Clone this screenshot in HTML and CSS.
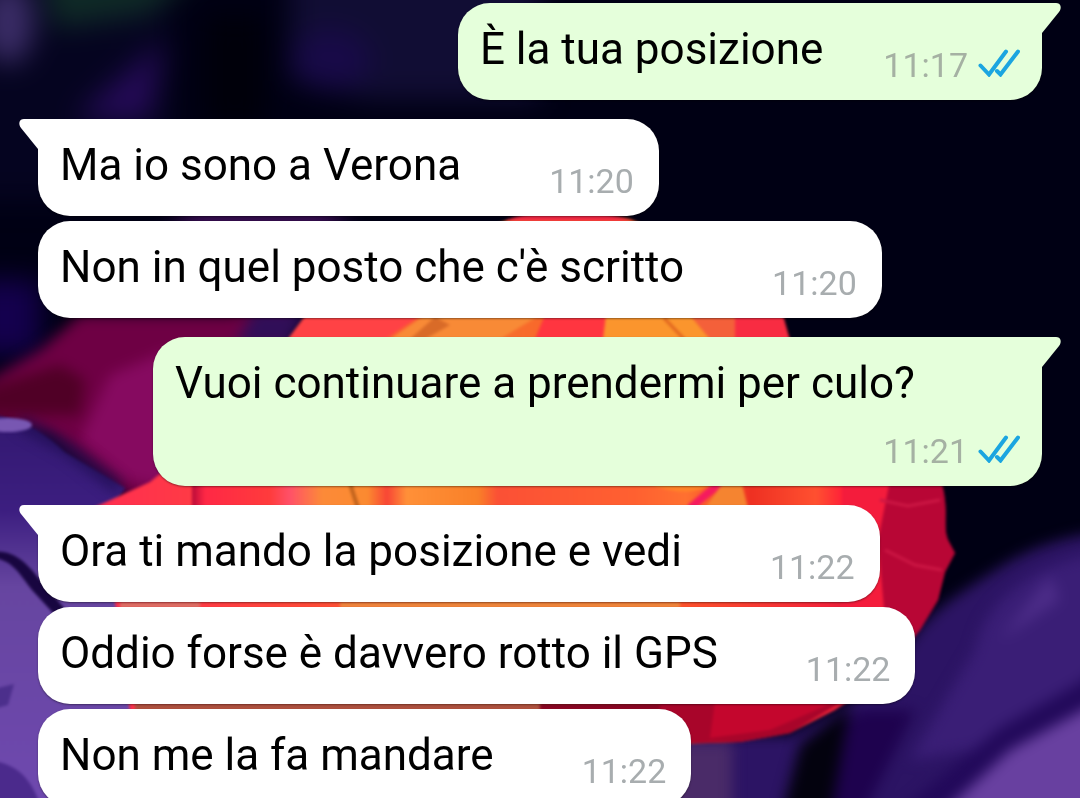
FILE: index.html
```html
<!DOCTYPE html>
<html lang="it">
<head>
    <meta charset="UTF-8">
    <meta name="viewport" content="width=device-width, initial-scale=1.0">
    <title>Chat</title>
    <link rel="stylesheet" href="styles.css">
</head>
<body>
    <!-- Wallpaper: rose on dark petals -->
    <svg class="wallpaper" viewBox="0 0 1080 798" preserveAspectRatio="xMidYMid slice" aria-hidden="true">
        <defs>
            <filter id="soft" x="-30%" y="-30%" width="160%" height="160%" color-interpolation-filters="sRGB"><feGaussianBlur stdDeviation="14"/></filter>
            <filter id="blur" x="-20%" y="-20%" width="140%" height="140%" color-interpolation-filters="sRGB"><feGaussianBlur stdDeviation="7"/></filter>
            <filter id="edge" color-interpolation-filters="sRGB"><feGaussianBlur stdDeviation="1.5"/></filter>
            <linearGradient id="rose" x1="0" y1="0" x2="1" y2="0">
                <stop offset="0" stop-color="#ff2d50"/>
                <stop offset="0.25" stop-color="#ff4a38"/>
                <stop offset="0.45" stop-color="#f5702c"/>
                <stop offset="0.65" stop-color="#ff5a28"/>
                <stop offset="0.85" stop-color="#f4243a"/>
                <stop offset="1" stop-color="#a80834"/>
            </linearGradient>
            <linearGradient id="heart" gradientUnits="userSpaceOnUse" x1="192" y1="0" x2="842" y2="0">
                <stop offset="0" stop-color="#b80a38"/>
                <stop offset="0.02" stop-color="#ff2845"/>
                <stop offset="0.12" stop-color="#ff3b3c"/>
                <stop offset="0.15" stop-color="#ff5068"/>
                <stop offset="0.2" stop-color="#fc8a38"/>
                <stop offset="0.27" stop-color="#fb8a30"/>
                <stop offset="0.3" stop-color="#f84535"/>
                <stop offset="0.33" stop-color="#ff9038"/>
                <stop offset="0.44" stop-color="#f98028"/>
                <stop offset="0.47" stop-color="#fb5035"/>
                <stop offset="0.68" stop-color="#ff6030"/>
                <stop offset="0.76" stop-color="#ff7030"/>
                <stop offset="0.86" stop-color="#ee3022"/>
                <stop offset="0.96" stop-color="#ff5030"/>
                <stop offset="1" stop-color="#ff2238"/>
            </linearGradient>
            <linearGradient id="petal" gradientUnits="userSpaceOnUse" x1="0" y1="415" x2="0" y2="798">
                <stop offset="0" stop-color="#321870"/>
                <stop offset="0.25" stop-color="#3c1e80"/>
                <stop offset="0.45" stop-color="#6645a0"/>
                <stop offset="1" stop-color="#6e48ae"/>
            </linearGradient>
        </defs>
        <rect width="1080" height="798" fill="#000014"/>
        <g filter="url(#soft)">
            <path d="M-60 -60H170V200H-60Z" fill="#050420"/>
            <path d="M290 -60H540V100H370L290 80Z" fill="#110d34"/>
            <ellipse cx="8" cy="22" rx="26" ry="42" fill="#3a2c66"/>
            <path d="M40 -30H200L150 14L55 28Z" fill="#0f2a26"/>
            <path d="M100 95L165 40L150 120H75Z" fill="#240a56"/>
            <ellipse cx="330" cy="60" rx="40" ry="30" fill="#180a48"/>
            <path d="M205 15H265V130H205Z" fill="#00000a"/>
            <path d="M180 205H340V235H180Z" fill="#451060"/>
            <path d="M-30 280H40V355H-30Z" fill="#14004e"/>
        </g>
        <g filter="url(#blur)">
            <path d="M-20 385L40 350L80 315H230L290 300V500H130L50 435L-20 420Z" fill="#6e0044"/>
            <path d="M-20 390L60 365L85 380L80 415L20 415H-20Z" fill="#500026"/>
            <path d="M110 375L170 350V490L125 480L80 440Z" fill="#860a60"/>
            <path d="M255 310H310L290 345H235Z" fill="#300e58"/>
        </g>
        <g filter="url(#edge)">
            <path d="M-10 415C25 418 50 438 65 452L125 488L105 520L130 615L135 810H-10Z" fill="url(#petal)"/>
            <path d="M-10 552C15 548 28 565 42 582L70 615H55L32 590C20 575 12 558 -10 558Z" fill="#180640"/>
            <path d="M-10 690L14 684L8 705L-10 710Z" fill="#4c2f8c"/>
            <path d="M-10 760C20 765 32 780 42 810H-10Z" fill="#4b2a8c"/>
        </g>
        <path d="M20 422L70 450L120 488" stroke="#1e0c50" stroke-width="10" fill="none" filter="url(#blur)"/>
        <ellipse cx="8" cy="425" rx="24" ry="7" fill="#7857b2" filter="url(#edge)"/>
        <path d="M1110 530C1030 542 1010 562 980 580C950 600 925 615 905 650L840 710L790 735L680 735V840H1110Z" fill="#2c1464" filter="url(#blur)"/>
        <g filter="url(#blur)">
            <path d="M1110 550C1030 565 985 600 975 650L910 760L1000 745L1110 660Z" fill="#3a1e76"/>
            <path d="M1050 575L1000 640L1060 600Z" fill="#4c2c88"/>
            <path d="M1120 685L1020 735L915 820H1120Z" fill="#6840a0"/>
            <path d="M1120 660L1000 728L890 820H935L1010 750L1120 690Z" fill="#22095a"/>
            <path d="M860 710H915L860 820H810L815 750Z" fill="#1e024e"/>
            <path d="M800 745L850 705L830 820H780Z" fill="#03020e"/>
            <path d="M670 742H732V820H670Z" fill="#4a2b68"/>
        </g>
        <g filter="url(#edge)">
            <path d="M505 221C530 210 600 210 630 219L700 250L770 310L790 340L941 485C950 510 942 525 948 540L955 553L945 572L938 600L920 630L880 680L835 710L790 733L740 742L680 744L130 712L115 602L95 507L150 482L250 400L290 336L305 316L400 260Z" fill="url(#rose)"/>
            <path d="M505 221C530 208 600 208 632 221Z" fill="#f02844"/>
            <path d="M305 316H420L385 339H289Z" fill="#ff4245"/>
            <path d="M390 339L425 315H540L500 339Z" fill="#f88a36"/>
            <path d="M410 339L435 317L450 325L425 339Z" fill="#d96b28"/>
            <path d="M545 315H606L604 339H535Z" fill="#ff3540"/>
            <path d="M606 315H690L710 339H603Z" fill="#fb952d"/>
            <path d="M664 318L685 340" stroke="#e0641f" stroke-width="3"/>
            <path d="M690 315H740V339H710Z" fill="#f4603a"/>
            <path d="M735 315H783L790 340H735Z" fill="#f82c42"/>
            <path d="M192 480H842V510H192Z" fill="url(#heart)"/>
            <path d="M350 482L352 490L358 508" stroke="#c0621c" stroke-width="4" fill="none"/>
            <path d="M650 484C680 496 700 492 712 484Z" fill="#ff8428"/>
            <path d="M690 508L708 493L722 482" stroke="#f51b5e" stroke-width="8" fill="none"/>
            <path d="M722 484H742L748 508H705Z" fill="#f58430"/>
            <path d="M875 480H941C950 510 942 525 948 540L955 553L945 572L938 600L920 630L875 680L862 560Z" fill="#b80635"/>
            <path d="M842 480H890L878 540L885 620H842Z" fill="#f41c3c"/>
            <path d="M880 500L908 506L940 500M885 550L915 565L942 570" stroke="#cc1744" stroke-width="3" fill="none"/>
            <path d="M120 602H200V608H120Z" fill="#dd7065"/>
            <path d="M340 602H680V608H340Z" fill="#ee863c"/>
            <path d="M135 703H540V711H135Z" fill="#ae513f"/>
            <path d="M540 703H690V711H540Z" fill="#880523"/>
            <path d="M660 700H845L790 733L740 742L660 744Z" fill="#a8052a"/>
            <path d="M715 700L835 702L770 730L710 738Z" fill="#c4062d"/>
        </g>
    </svg>

    <main class="chat">
        <div class="message sent tail">
            <span class="text">È la tua posizione</span>
            <span class="meta">
                <time>11:17</time>
                <svg class="ticks" viewBox="0 0 42 28" role="img" aria-label="Letto"><path d="M2.5 16.5L11 25.5L28 2.5M19 22L22.5 25.5L40 2.5"/></svg>
            </span>
        </div>

        <div class="message received tail">
            <span class="text">Ma io sono a Verona</span>
            <span class="meta"><time>11:20</time></span>
        </div>
        <div class="message received">
            <span class="text">Non in quel posto che c'è scritto</span>
            <span class="meta"><time>11:20</time></span>
        </div>

        <div class="message sent tail">
            <span class="text">Vuoi continuare a prendermi per culo?</span>
            <span class="meta">
                <time>11:21</time>
                <svg class="ticks" viewBox="0 0 42 28" role="img" aria-label="Letto"><path d="M2.5 16.5L11 25.5L28 2.5M19 22L22.5 25.5L40 2.5"/></svg>
            </span>
        </div>

        <div class="message received tail">
            <span class="text">Ora ti mando la posizione e vedi</span>
            <span class="meta"><time>11:22</time></span>
        </div>
        <div class="message received">
            <span class="text">Oddio forse è davvero rotto il GPS</span>
            <span class="meta"><time>11:22</time></span>
        </div>
        <div class="message received">
            <span class="text">Non me la fa mandare</span>
            <span class="meta"><time>11:22</time></span>
        </div>
    </main>
</body>
</html>
```
FILE: styles.css
```css
* {
    box-sizing: border-box;
}
body {
    margin: 0;
    background: #000014;
    font-family: Roboto, 'Liberation Sans', sans-serif;
}
.wallpaper {
    position: fixed;
    inset: 0;
    z-index: -1;
    width: 100%;
    height: 100%;
}
.chat {
    display: flex;
    flex-direction: column;
    gap: 5px;
    height: 100vh;
    padding: 3px 38px 0;
    overflow: hidden;
}
.message {
    position: relative;
    display: flex;
    flex-wrap: wrap;
    flex-shrink: 0;
    max-width: calc(100% - 115px);
    padding: 20px 25px 15px 22px;
    border-radius: 32px;
    box-shadow: 0 1px 2px rgba(0, 0, 0, 0.4);
}
.message.tail:not(:first-child) {
    margin-top: 14px;
}
.text {
    font-size: 44px;
    line-height: 52px;
    color: #000;
}
.meta {
    display: flex;
    align-items: flex-end;
    gap: 10px;
    margin-left: auto;
    padding-top: 23px;
    padding-left: 88px;
    font-size: 34px;
    line-height: 39px;
    color: #a8adaf;
}
.received {
    align-self: flex-start;
    background: #fff;
}
.sent {
    align-self: flex-end;
    padding-right: 22px;
    background: #e5ffdb;
}
.sent .meta {
    padding-left: 60px;
    color: #a5b1a3;
}
.ticks {
    width: 42px;
    height: 28px;
    margin-bottom: 8px;
    fill: none;
    stroke: #1ba5e0;
    stroke-width: 4;
    stroke-linecap: round;
}

/* Bubble tails */
.tail::before {
    content: '';
    position: absolute;
    top: 0;
    width: 20px;
    height: 30px;
    background: inherit;
}
.received.tail {
    border-top-left-radius: 0;
}
.received.tail::before {
    right: calc(100% - 1px);
    clip-path: path('M20 0H5C0 0 -1 5 2 9L19 30H20Z');
}
.sent.tail {
    border-top-right-radius: 0;
}
.sent.tail::before {
    left: calc(100% - 1px);
    clip-path: path('M0 0H15C20 0 21 5 18 9L1 30H0Z');
}
```
